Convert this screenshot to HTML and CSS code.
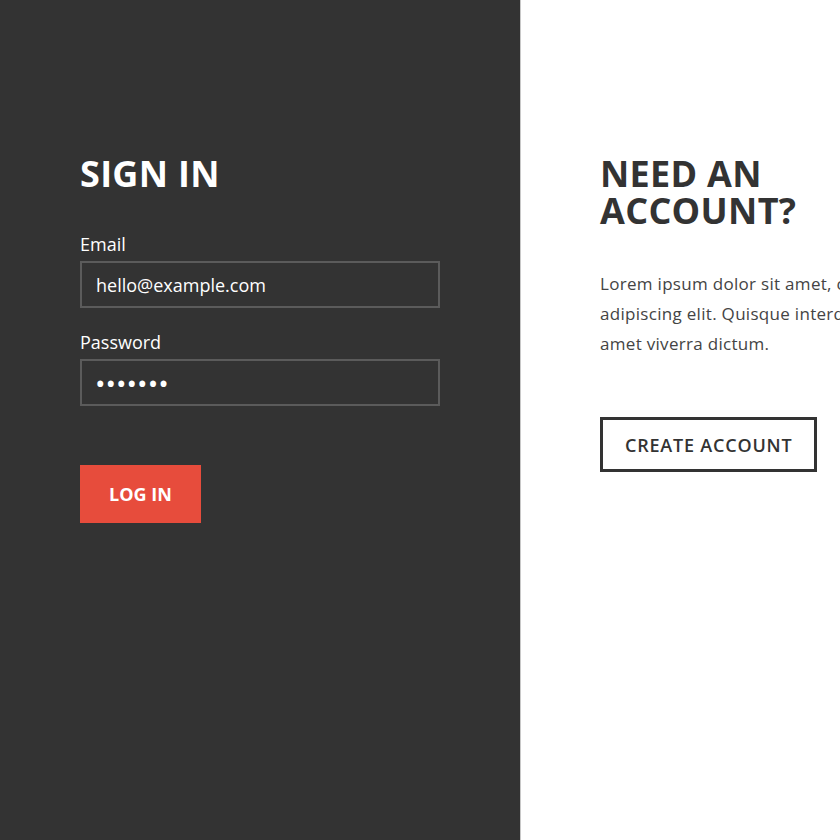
FILE: index.html
```html
<!DOCTYPE html>
<html lang="en">
<head>
<meta charset="utf-8">
<title>Sign in</title>
<link rel="stylesheet" href="styles.css">
</head>
<body>
<div class="page">
  <section class="panel panel-dark">
    <h1 class="title">SIGN IN</h1>
    <form class="form">
      <label class="field">
        <span class="label">Email</span>
        <input class="input" type="email" value="hello@example.com">
      </label>
      <label class="field">
        <span class="label">Password</span>
        <input class="input input-pass" type="password" value="1234567">
      </label>
      <button class="btn btn-primary" type="button">LOG IN</button>
    </form>
  </section>
  <section class="panel panel-light">
    <h1 class="title">NEED AN<br>ACCOUNT?</h1>
    <p class="text">Lorem ipsum dolor sit amet, consectetur adipiscing elit. Quisque interdum sit amet viverra dictum.</p>
    <button class="btn btn-outline" type="button">CREATE ACCOUNT</button>
  </section>
</div>
</body>
</html>
```
FILE: styles.css
```css
html, body {
  margin: 0;
  padding: 0;
  height: 100%;
  overflow: hidden;
  background: #fff;
}
body {
  font-family: "Open Sans", "Noto Sans", sans-serif;
}
.page {
  display: flex;
  width: 1041px;
  height: 100vh;
}
.panel {
  flex: 0 0 auto;
  box-sizing: border-box;
  padding: 155px 80px 0 80px;
}
.panel-dark {
  width: 520px;
  background: #333333;
  color: #fff;
}
.panel-light {
  width: 521px;
  background: #fff;
  color: #333;
  border-left: 1px solid #c8c8c8;
  padding-left: 79px;
}
.title {
  margin: 0;
  font-size: 36px;
  line-height: 37px;
  font-weight: 700;
  letter-spacing: 0.3px;
}
.form {
  display: flex;
  flex-direction: column;
  align-items: flex-start;
  margin-top: 40px;
}
.field {
  display: flex;
  flex-direction: column;
  width: 360px;
  margin-bottom: 22px;
}
.label {
  font-size: 18px;
  line-height: 24px;
  margin-bottom: 5px;
}
.input {
  box-sizing: border-box;
  height: 47px;
  width: 360px;
  border: 2px solid #5b5b5b;
  background: transparent;
  color: #fff;
  font-family: inherit;
  font-size: 18px;
  padding: 0 14px;
  outline: none;
}
.input-pass {
  font-size: 28px;
  padding-left: 13px;
}
.btn {
  font-family: inherit;
  font-weight: 700;
  font-size: 18px;
  cursor: pointer;
}
.btn-primary {
  margin-top: 37px;
  height: 58px;
  padding: 0 29px;
  background: #e74c3c;
  color: #fff;
  border: none;
}
.text {
  margin: 40px 0 0;
  font-size: 17px;
  line-height: 30px;
  letter-spacing: 0.3px;
  color: #444;
  width: 340px;
}
.btn-outline {
  margin-top: 58px;
  height: 55px;
  padding: 0 22px;
  background: #fff;
  color: #333;
  font-weight: 600;
  letter-spacing: 0.8px;
  border: 3px solid #333;
}
```
